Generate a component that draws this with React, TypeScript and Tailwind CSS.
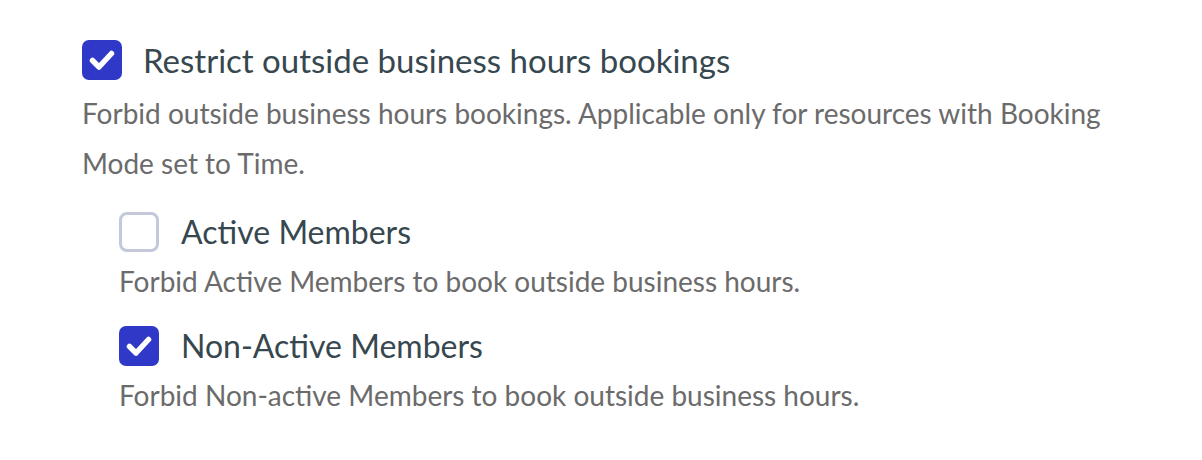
import { useState } from "react";

type Option = {
  id: string;
  label: string;
  help: string;
};

const SUB_OPTIONS: Option[] = [
  { id: "active", label: "Active Members", help: "Forbid Active Members to book outside business hours." },
  { id: "inactive", label: "Non-Active Members", help: "Forbid Non-active Members to book outside business hours." },
];

function Box({ checked, onToggle }: { checked: boolean; onToggle: () => void }) {
  return (
    <button
      type="button"
      onClick={onToggle}
      className={
        checked
          ? "flex h-10 w-10 shrink-0 items-center justify-center rounded-[7px] bg-[#2f38c7]"
          : "flex h-10 w-10 shrink-0 items-center justify-center rounded-[8px] border-[3px] border-[#c3c8da] bg-white"
      }
    >
      {checked && (
        <svg viewBox="0 0 40 40" className="h-10 w-10">
          <path
            d="M10.5 20.5 L17 27 L29.5 13.5"
            fill="none"
            stroke="white"
            strokeWidth="5.5"
            strokeLinecap="round"
            strokeLinejoin="round"
          />
        </svg>
      )}
    </button>
  );
}

export default function App() {
  const [restrict, setRestrict] = useState(true);
  const [subs, setSubs] = useState<Record<string, boolean>>({ active: false, inactive: true });

  return (
    <main className="h-[460px] w-[1202px] bg-white pl-[82px] pt-10 font-['Lato',sans-serif]">
      <div className="flex items-center gap-[21px]">
        <Box checked={restrict} onToggle={() => setRestrict(!restrict)} />
        <span className="text-[33px] leading-10 text-[#37474f]">Restrict outside business hours bookings</span>
      </div>
      <p className="mt-2 w-[1060px] text-[28px] leading-[50px] text-[#6b6b6b]">
        Forbid outside business hours bookings. Applicable only for resources with Booking Mode set to Time.
      </p>

      <div className="mt-6 flex flex-col gap-5 pl-[37px]">
        {SUB_OPTIONS.map((opt) => (
          <div key={opt.id}>
            <div className="flex items-center gap-[22px]">
              <Box
                checked={subs[opt.id]}
                onToggle={() => setSubs({ ...subs, [opt.id]: !subs[opt.id] })}
              />
              <span className="text-[32px] leading-10 text-[#37474f]">{opt.label}</span>
            </div>
            <p className="mt-1 text-[28px] leading-[50px] text-[#6b6b6b]">{opt.help}</p>
          </div>
        ))}
      </div>
    </main>
  );
}
